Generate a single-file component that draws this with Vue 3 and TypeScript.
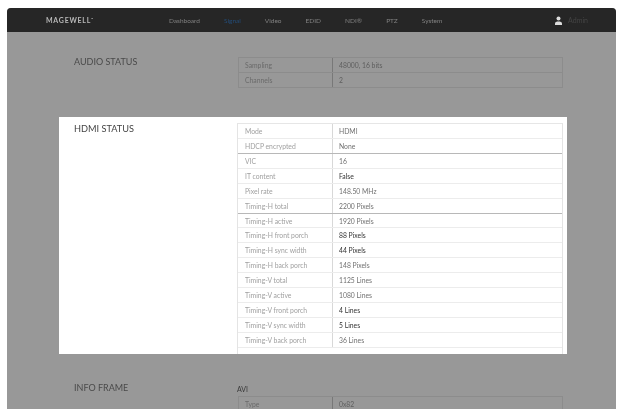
<script setup lang="ts">
interface Row { k: string; v: string; strong?: boolean }
const nav = ['Dashboard', 'Signal', 'Video', 'EDID', 'NDI®', 'PTZ', 'System']
const audio: Row[] = [
  { k: 'Sampling', v: '48000, 16 bits' },
  { k: 'Channels', v: '2' },
]
const hdmi: Row[] = [
  { k: 'Mode', v: 'HDMI' },
  { k: 'HDCP encrypted', v: 'None' },
  { k: 'VIC', v: '16' },
  { k: 'IT content', v: 'False', strong: true },
  { k: 'Pixel rate', v: '148.50 MHz' },
  { k: 'Timing-H total', v: '2200 Pixels' },
  { k: 'Timing-H active', v: '1920 Pixels' },
  { k: 'Timing-H front porch', v: '88 Pixels', strong: true },
  { k: 'Timing-H sync width', v: '44 Pixels', strong: true },
  { k: 'Timing-H back porch', v: '148 Pixels' },
  { k: 'Timing-V total', v: '1125 Lines' },
  { k: 'Timing-V active', v: '1080 Lines' },
  { k: 'Timing-V front porch', v: '4 Lines', strong: true },
  { k: 'Timing-V sync width', v: '5 Lines', strong: true },
  { k: 'Timing-V back porch', v: '36 Lines' },
]
</script>

<template>
  <div class="shell">
    <header class="nav">
      <span class="logo">MAGEWELL<sup>™</sup></span>
      <nav class="links">
        <span v-for="n in nav" :key="n" :class="{ active: n === 'Signal' }">{{ n }}</span>
      </nav>
      <span class="user">
        <svg width="7" height="9" viewBox="0 0 7 9"><circle cx="3.5" cy="2.4" r="2" fill="#ddd" /><path d="M0 9V7.4C0 6.2 1.6 5.6 3.5 5.6S7 6.2 7 7.4V9Z" fill="#ddd" /></svg>
        <span>Admin</span>
      </span>
    </header>
    <main class="content">
      <section class="audio">
        <h2>AUDIO STATUS</h2>
        <div class="table dim">
          <div v-for="r in audio" :key="r.k" class="row">
            <span class="k">{{ r.k }}</span><span class="v">{{ r.v }}</span>
          </div>
        </div>
      </section>
      <section class="card">
        <h2>HDMI STATUS</h2>
        <div class="table">
          <div v-for="r in hdmi" :key="r.k" class="row" :class="{ strong: r.strong }">
            <span class="k">{{ r.k }}</span><span class="v">{{ r.v }}</span>
          </div>
        </div>
      </section>
      <section class="info">
        <h2>INFO FRAME</h2>
        <div class="info-body">
          <div class="avi">AVI</div>
          <div class="table dim">
            <div class="row"><span class="k">Type</span><span class="v">0x82</span></div>
          </div>
        </div>
      </section>
    </main>
  </div>
</template>

<style>
html, body { margin: 0; background: #fff; overflow: hidden; }
</style>

<style scoped>
.shell {
  margin: 8px 2px 0 7px;
  height: 401px;
  overflow: hidden;
  background: #989898;
  border-radius: 4px 4px 0 0;
  font-family: Lato, "Open Sans", sans-serif;
  color: #555;
  filter: blur(0.55px);
}
.nav {
  height: 24px;
  background: #262626;
  display: flex;
  align-items: center;
  padding: 0 28px 0 39px;
  font-size: 6.5px;
  color: #828282;
}
.logo { font-weight: 700; font-size: 7px; color: #b8b8b8; width: 123px; letter-spacing: 0.75px; }
.logo sup { font-size: 3px; }
.links { display: flex; gap: 24px; }
.active { color: #234c78; }
.user { margin-left: auto; display: flex; align-items: center; gap: 6px; color: #444; font-size: 7px; }
h2 { margin: 0; font-weight: 400; font-size: 9px; line-height: 12px; }
.audio, .info { display: flex; align-items: flex-start; padding-left: 67px; color: #4a4a4a; }
.audio { padding-top: 24px; height: 85px; box-sizing: border-box; }
.audio h2, .info h2 { width: 164px; flex: none; }
.audio .table { margin-top: 1px; }
.table { width: 326px; box-sizing: border-box; border-left: 1px solid #e4e4e4; border-right: 1px solid #e4e4e4; border-top: 1px solid #e6e6e6; flex: none; }
.table.dim { border-color: #8c8c8c; width: 325px; }
.row { display: flex; height: 14.93px; box-sizing: border-box; border-bottom: 1px solid #ececec; font-size: 6.8px; line-height: 14px; color: #a0a0a0; }
.dim .row { color: #6a6a6a; }
.k { width: 95px; box-sizing: border-box; padding-left: 7px; border-right: 1px solid #d8d8d8; flex: none; }
.dim .k { border-color: #787878; padding-left: 6px; width: 94px; }
.v { padding-left: 6px; color: #707070; }
.strong .v { color: #333; }
.dim .v { color: #5e5e5e; }
.card {
  margin-left: 52px;
  width: 508px;
  height: 237px;
  box-sizing: border-box;
  background: #fff;
  padding: 6px 4px 0 15px;
  display: flex;
  justify-content: space-between;
}
.card h2 { color: #444; font-size: 9.2px; }
.row:nth-child(2), .row:nth-child(6) { border-bottom-color: #b8b8b8; }
.dim .row, .dim .row:nth-child(2) { border-bottom-color: #8c8c8c; }
.info { padding-top: 28px; }
.info-body { flex: none; width: 328px; margin-left: -1px; }
.avi { font-size: 7px; line-height: 14px; color: #3a3a3a; }
.info .table { margin: 0 0 0 1px; }
.info .row { height: 20px; }
</style>
